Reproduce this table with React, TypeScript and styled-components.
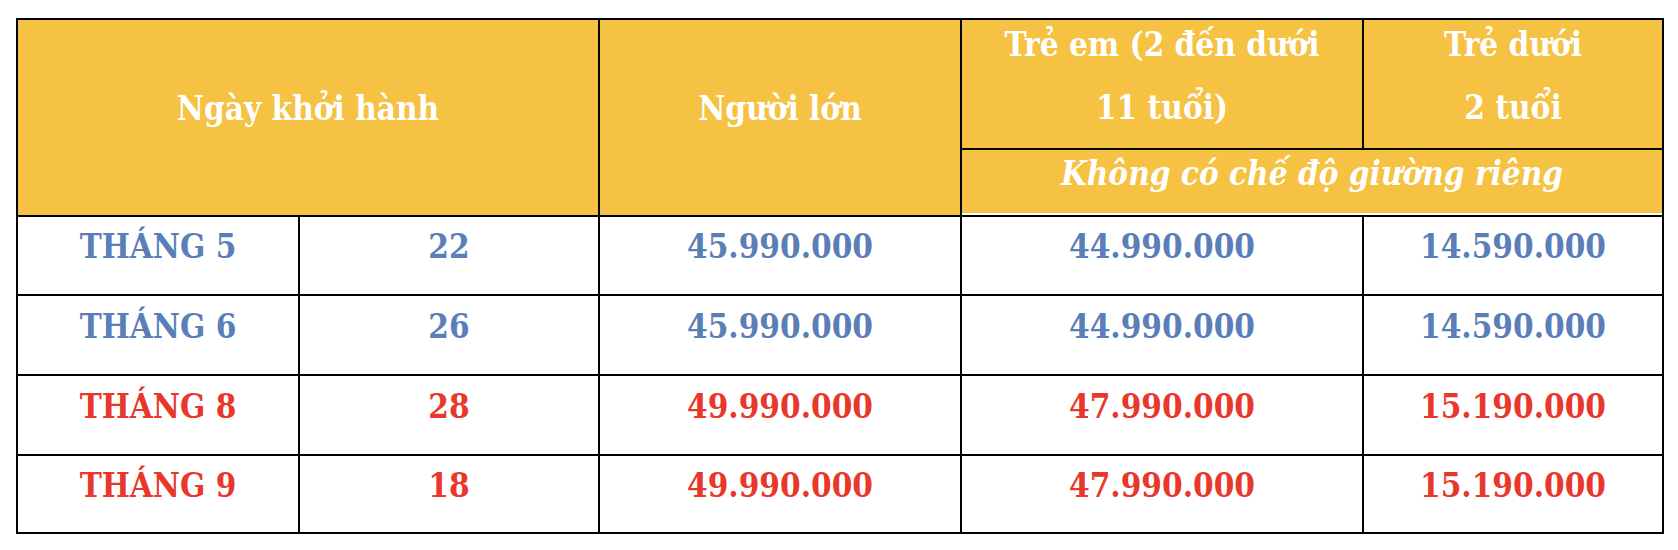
import styled, { createGlobalStyle, css } from "styled-components";

type Tone = "blue" | "red";

interface Departure {
  month: string;
  day: string;
  adult: string;
  child: string;
  infant: string;
  tone: Tone;
}

const departures: Departure[] = [
  { month: "THÁNG 5", day: "22", adult: "45.990.000", child: "44.990.000", infant: "14.590.000", tone: "blue" },
  { month: "THÁNG 6", day: "26", adult: "45.990.000", child: "44.990.000", infant: "14.590.000", tone: "blue" },
  { month: "THÁNG 8", day: "28", adult: "49.990.000", child: "47.990.000", infant: "15.190.000", tone: "red" },
  { month: "THÁNG 9", day: "18", adult: "49.990.000", child: "47.990.000", infant: "15.190.000", tone: "red" },
];

const GlobalStyle = createGlobalStyle`
  body {
    margin: 0;
    background: #ffffff;
  }
`;

const App: React.FC = () => {
  return (
    <>
      <GlobalStyle />
      <Page>
        <PriceTable>
          <HeadCell $col="1 / 3" $row="1 / 3" $lift={18}>
            Ngày khởi hành
          </HeadCell>
          <HeadCell $col="3 / 4" $row="1 / 3" $lift={18}>
            Người lớn
          </HeadCell>
          <HeadCell $col="4 / 5" $row="1 / 2" $lift={16} $tall>
            Trẻ em (2 đến dưới
            <br />
            11 tuổi)
          </HeadCell>
          <HeadCell $col="5 / 6" $row="1 / 2" $lift={16} $tall>
            Trẻ dưới
            <br />
            2 tuổi
          </HeadCell>
          <NoteCell>Không có chế độ giường riêng</NoteCell>

          {departures.map((d) => (
            <Row key={d.month}>
              <BodyCell $tone={d.tone}>{d.month}</BodyCell>
              <BodyCell $tone={d.tone}>{d.day}</BodyCell>
              <BodyCell $tone={d.tone}>{d.adult}</BodyCell>
              <BodyCell $tone={d.tone}>{d.child}</BodyCell>
              <BodyCell $tone={d.tone}>{d.infant}</BodyCell>
            </Row>
          ))}
        </PriceTable>
      </Page>
    </>
  );
};

export default App;

const serif = css`
  font-family: "DejaVu Serif Condensed", "DejaVu Serif", "Liberation Serif", serif;
  font-stretch: condensed;
  font-weight: bold;
  font-size: 33px;
`;

const Page = styled.div`
  padding: 18px 0 0 16px;
`;

const PriceTable = styled.div`
  display: grid;
  grid-template-columns: 280px 298px 360px 400px 298px;
  grid-template-rows: 128px 65px 77px 78px 78px 76px;
  gap: 2px;
  padding: 2px;
  width: fit-content;
  background: #000000;
`;

const Row = styled.div`
  display: contents;
`;

const HeadCell = styled.div<{ $col: string; $row: string; $lift: number; $tall?: boolean }>`
  ${serif};
  grid-column: ${(p) => p.$col};
  grid-row: ${(p) => p.$row};
  display: flex;
  align-items: center;
  justify-content: center;
  text-align: center;
  padding-bottom: ${(p) => p.$lift}px;
  background: #f5c243;
  color: #ffffff;
  line-height: ${(p) => (p.$tall ? "63px" : "normal")};
  white-space: nowrap;
`;

const NoteCell = styled.div`
  ${serif};
  grid-column: 4 / 6;
  grid-row: 2 / 3;
  display: flex;
  align-items: center;
  justify-content: center;
  padding-bottom: 18px;
  background: #f5c243;
  color: #ffffff;
  font-style: italic;
  box-shadow: inset 0 -2px 0 #ffffff;
  white-space: nowrap;
`;

const BodyCell = styled.div<{ $tone: Tone }>`
  ${serif};
  display: flex;
  align-items: center;
  justify-content: center;
  padding-bottom: 18px;
  background: #ffffff;
  color: ${(p) => (p.$tone === "red" ? "#e8372b" : "#5a7fb8")};
  white-space: nowrap;
`;
